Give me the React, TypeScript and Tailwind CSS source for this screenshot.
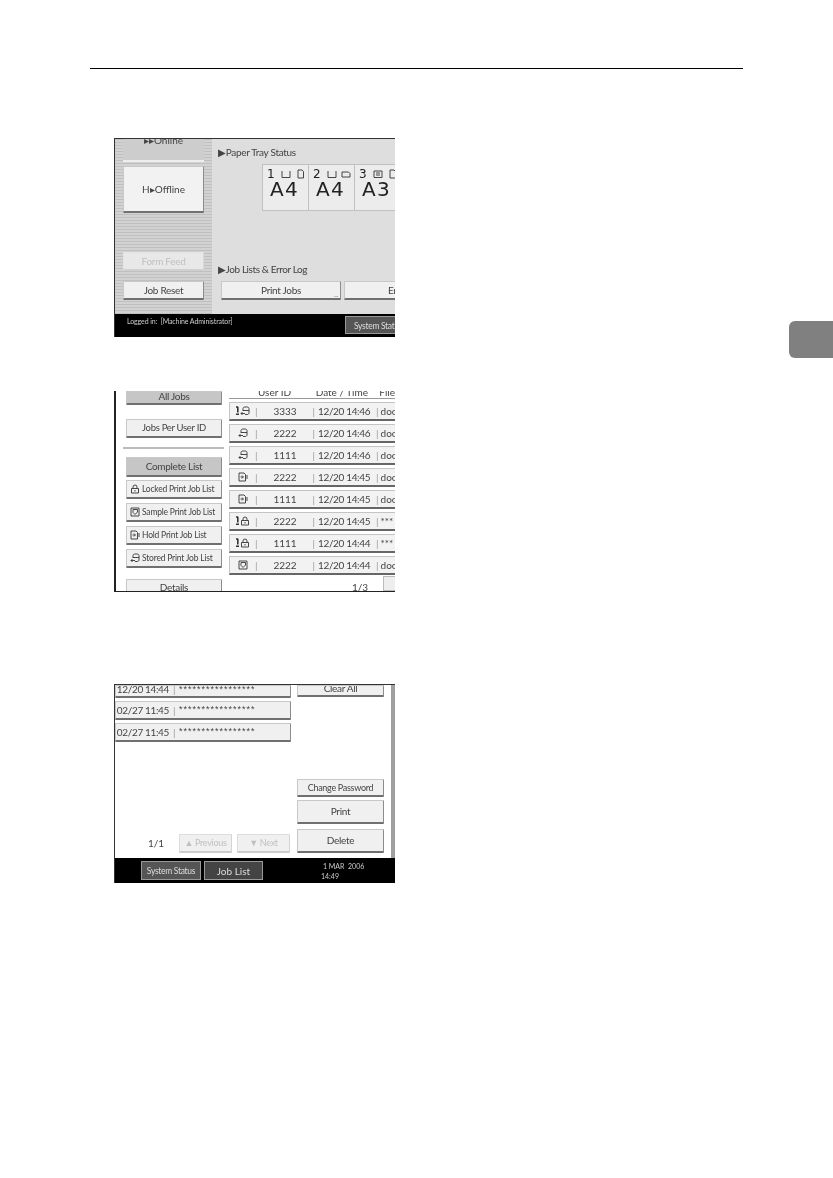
import React from 'react';
import { twMerge } from 'tailwind-merge';

const FONT = "font-['Lato',sans-serif]";

const Btn: React.FC<{ className?: string; children?: React.ReactNode }> = ({ className = '', children }) => (
  <div
    className={twMerge(
      'flex shrink-0 items-center justify-center overflow-hidden whitespace-nowrap rounded-[1px] border border-b-2 border-[#c8c8c8] border-b-[#707070] border-r-[#8c8c8c] bg-[#f0f0f0] text-[10px] tracking-[-0.3px] text-[#444]',
      className,
    )}
  >
    {children}
  </div>
);

// tiny drawings of the panel's job and tray icons
const Ico: React.FC<{ d: string; className?: string; w?: number; sw?: number }> = ({ d, className = '', w = 10, sw = 0.9 }) => (
  <svg width={w} height="10" viewBox={`0 0 ${w} 10`} fill="none" stroke="#333" strokeWidth={sw} className={`shrink-0 ${className}`}>
    <path d={d} />
  </svg>
);

const LOCK = 'M3 4.5V3a2 2 0 0 1 4 0v1.5M1.5 4.5h7V9h-7zM5 6v1.5';
const SAMPLE = 'M1 1h8v8H1zM3 2.5h4.5V5L5 7.5 3 5.5z';
const HOLD = 'M1 1h5l1.5 1.5V9H1zM2.5 5H5M4 3.5 5.5 5 4 6.5M9 3v4';
const STORED = 'M3 5V2.5C3 1.5 4 1 5 1h2c1 0 2 .5 2 1.5V7c0 1-1 1.5-2 1.5H5M3 4.5h6M5 7.5H1M2.5 6 1 7.5 2.5 9';
const USER = 'M1 1h2.2M2.8 1v5.5M1 8.2h3';
const TRAY_EMPTY = 'M1 2v6.5h8V2';
const TRAY_FULL = 'M1 2v6.5h8V2M1 2h8M3 4h4M3 6h4';

type Job = { icons: string[]; id: string; date: string; file: string };

const JOBS: Job[] = [
  { icons: [USER, STORED], id: '3333', date: '12/20 14:46', file: 'doc' },
  { icons: [STORED], id: '2222', date: '12/20 14:46', file: 'doc' },
  { icons: [STORED], id: '1111', date: '12/20 14:46', file: 'doc' },
  { icons: [HOLD], id: '2222', date: '12/20 14:45', file: 'doc' },
  { icons: [HOLD], id: '1111', date: '12/20 14:45', file: 'doc' },
  { icons: [USER, LOCK], id: '2222', date: '12/20 14:45', file: '***' },
  { icons: [USER, LOCK], id: '1111', date: '12/20 14:44', file: '***' },
  { icons: [SAMPLE], id: '2222', date: '12/20 14:44', file: 'doc' },
];

const Tray: React.FC<{ n: string; size: string; first: string; second: string }> = ({ n, size, first, second }) => (
  <div className="h-[47px] w-[46px] shrink-0 border-b border-l border-t border-[#c0c0c0] bg-[#ececec] font-['DejaVu_Sans',sans-serif] text-[#222]">
    <div className="flex h-[15px] items-center pl-[4px] pt-[3px] text-[12px] leading-[12px]">
      <span className="w-[14px]">{n}</span>
      <Ico d={first} className="mr-[4px]" />
      <Ico d={second} />
    </div>
    <div className="pl-[7px] text-[20px] leading-[18px] tracking-[1.2px]">{size}</div>
  </div>
);

const StatusScreen = () => (
  <section className="flex h-[199px] w-[281px] flex-col overflow-hidden border-l border-t border-[#333] bg-[#dedede] blur-[0.3px]">
    <div className="flex min-h-0 flex-1">
      <div className="flex w-[97px] shrink-0 flex-col bg-[repeating-linear-gradient(0deg,#c0c0c0_0px,#c0c0c0_1px,#d2d2d2_1px,#d2d2d2_3px)] px-[8px]">
        <div className="h-[23px] w-[81px] shrink-0 overflow-hidden border-b-2 border-[#eee] bg-[#cdcdcd] text-center text-[10px] leading-[2px] text-[#444]">
          ▸▸Online
        </div>
        <Btn className="mt-[4px] h-[47px] w-[81px] bg-[#f2f2f2] tracking-normal">H▸Offline</Btn>
        <Btn className="mt-[39px] h-[19px] w-[81px] border-[#e4e4e4] border-b-[#d0d0d0] border-r-[#d8d8d8] bg-[#e8e8e8] text-[#c0c0c0]">Form Feed</Btn>
        <Btn className="mt-[10px] h-[19px] w-[81px]">Job Reset</Btn>
      </div>
      <div className="flex min-w-0 flex-1 flex-col pl-[6px]">
        <div className="mt-[7px] text-[10px] leading-[13px] tracking-[-0.3px] text-[#444]">▶Paper Tray Status</div>
        <div className="ml-[44px] mt-[5px] flex">
          <Tray n="1" size="A4" first={TRAY_EMPTY} second="M3 1h4l1.5 1.5V9H3z" />
          <Tray n="2" size="A4" first={TRAY_EMPTY} second="M1 3h6.5L9 4.5V8H1z" />
          <Tray n="3" size="A3" first={TRAY_FULL} second="M3 1h4l1.5 1.5V9H3z" />
        </div>
        <div className="mt-[52px] text-[10px] leading-[13px] tracking-[-0.4px] text-[#444]">▶Job Lists &amp; Error Log</div>
        <div className="ml-[3px] mt-[5px] flex w-[190px] gap-[3px]">
          <Btn className="relative h-[19px] w-[120px]">
            Print Jobs
            <span className="absolute bottom-0 right-[2px] text-[7px] leading-none text-[#888]">...</span>
          </Btn>
          <Btn className="h-[19px] w-[100px] justify-start pl-[43px]">Error Log</Btn>
        </div>
      </div>
    </div>
    <div className="flex h-[23px] shrink-0 items-start overflow-hidden bg-black pl-[12px]">
      <span className="mt-[2px] w-[218px] shrink-0 whitespace-nowrap text-[7px] leading-[10px] tracking-[-0.1px] text-[#ccc]">Logged in:&nbsp; [Machine Administrator]</span>
      <div className="mt-[2px] h-[18px] w-[80px] shrink-0 whitespace-nowrap border border-[#999] bg-[#555] pl-[8px] text-[8.5px] leading-[18px] tracking-[-0.3px] text-[#ddd]">System Status</div>
    </div>
  </section>
);

const SideBtn: React.FC<{ icon: string; label: string }> = ({ icon, label }) => (
  <Btn className="h-[19px] w-[96px] justify-start gap-[2px] pl-[3px] text-[8.5px] tracking-[-0.2px]">
    <Ico d={icon} />
    {label}
  </Btn>
);

const ListScreen = () => (
  <section className="flex h-[201px] w-[281px] overflow-hidden border-b border-l-2 border-[#222] bg-white blur-[0.3px]">
    <div className="flex w-[113px] shrink-0 flex-col pl-[10px]">
      <Btn className="h-[14px] w-[96px] items-start bg-[#c6c6c6] leading-[8px]">All Jobs</Btn>
      <Btn className="mt-[14px] h-[19px] w-[96px] text-[9.5px]">Jobs Per User ID</Btn>
      <div className="-ml-[3px] mt-[9px] h-[2px] w-[101px] shrink-0 bg-[#bbb]" />
      <Btn className="mt-[8px] h-[20px] w-[96px] bg-[#c6c6c6]">Complete List</Btn>
      <div className="mt-[3px] flex flex-col gap-[4px]">
        <SideBtn icon={LOCK} label="Locked Print Job List" />
        <SideBtn icon={SAMPLE} label="Sample Print Job List" />
        <SideBtn icon={HOLD} label="Hold Print Job List" />
        <SideBtn icon={STORED} label="Stored Print Job List" />
      </div>
      <Btn className="mt-[11px] h-[20px] w-[96px] items-start">Details</Btn>
    </div>
    <div className="flex min-w-0 flex-1 flex-col text-[10px] text-[#444]">
      <div className="flex h-[8px] shrink-0 items-start overflow-hidden whitespace-nowrap border-b border-[#999] pl-[29px] leading-[3px]">
        <span className="w-[58px]">User ID</span>
        <span className="w-[64px]">Date / Time</span>
        <span>File</span>
      </div>
      <div className="mt-[3px] flex flex-col gap-[3px]">
        {JOBS.map((j, i) => (
          <div key={i} className="flex h-[19px] w-[170px] shrink-0 items-center overflow-hidden border border-b-2 border-[#c4c4c4] border-b-[#666] bg-[#f2f2f2]">
            <div className="flex w-[25px] shrink-0 items-center justify-center">
              {j.icons.map((d, k) => (
                <Ico key={k} d={d} w={k === 0 && j.icons.length > 1 ? 5 : 10} sw={k === 0 && j.icons.length > 1 ? 1.6 : 0.9} />
              ))}
            </div>
            <span className="text-[#999]">|</span>
            <span className="w-[55px] text-center">{j.id}</span>
            <span className="text-[#999]">|</span>
            <span className="w-[61px] whitespace-nowrap pl-[3px] tracking-[-0.35px]">{j.date}</span>
            <span className="text-[#999]">|</span>
            <span className="pl-[2px]">{j.file}</span>
          </div>
        ))}
      </div>
      <div className="flex flex-1 items-end pl-[123px]">
        <span className="-mb-[2px] w-[31px] shrink-0 leading-[12px]">1/3</span>
        <div className="h-[15px] w-[20px] shrink-0 border border-[#bbb] bg-[#eee]" />
      </div>
    </div>
  </section>
);

const MiniRow: React.FC<{ date: string; h: string }> = ({ date, h }) => (
  <Btn className={`${h} w-[176px] justify-start`}>
    <span className="w-[53px] shrink-0 whitespace-nowrap text-right tracking-[-0.35px]">{date}</span>
    <span className="w-[10px] shrink-0 text-center text-[#999]">|</span>
    <span className="font-['Liberation_Sans',sans-serif] text-[9px] tracking-[1px]">*****************</span>
  </Btn>
);

const PasswordScreen = () => (
  <section className="flex h-[199px] w-[281px] flex-col overflow-hidden border-l border-t border-[#333] bg-white blur-[0.3px]">
    <div className="flex min-h-0 flex-1 border-r-4 border-[#a0a0a0]">
      <div className="flex w-[176px] shrink-0 flex-col">
        <div className="flex flex-col gap-[3px]">
          <MiniRow date="12/20 14:44" h="h-[13px] pb-[3px]" />
          <MiniRow date="02/27 11:45" h="h-[19px]" />
          <MiniRow date="02/27 11:45" h="h-[19px]" />
        </div>
        <div className="mb-[5px] mt-auto flex items-center">
          <span className="w-[64px] pl-[33px] text-[10px] text-[#444]">1/1</span>
          <Btn className="h-[19px] w-[53px] border-[#ddd] border-b-[#ccc] border-r-[#d4d4d4] bg-[#f0f0f0] text-[9px] text-[#c0c0c0]">▲ Previous</Btn>
          <Btn className="ml-[5px] h-[19px] w-[53px] border-[#ddd] border-b-[#ccc] border-r-[#d4d4d4] bg-[#f0f0f0] text-[9px] text-[#c0c0c0]">▼ Next</Btn>
        </div>
      </div>
      <div className="ml-[6px] flex w-[87px] shrink-0 flex-col">
        <Btn className="h-[12px] w-[87px] items-start leading-[5px]">Clear All</Btn>
        <Btn className="mt-[82px] h-[18px] w-[87px] text-[9px]">Change Password</Btn>
        <Btn className="mt-[3px] h-[24px] w-[87px]">Print</Btn>
        <Btn className="mt-[5px] h-[24px] w-[87px]">Delete</Btn>
      </div>
    </div>
    <div className="flex h-[25px] shrink-0 items-center bg-black pl-[26px]">
      <div className="h-[19px] w-[60px] whitespace-nowrap border border-[#999] bg-[#555] text-center text-[8.5px] leading-[18px] tracking-[-0.3px] text-[#ddd]">System Status</div>
      <div className="ml-[3px] h-[19px] w-[59px] whitespace-nowrap border border-[#999] bg-[#444] text-center text-[10px] leading-[18px] text-[#ddd]">Job List</div>
      <div className="ml-[58px] w-[50px] text-[7px] leading-[10px] text-[#ccc]">
        <div className="whitespace-nowrap pl-[2px]">1 MAR&nbsp; 2006</div>
        <div>14:49</div>
      </div>
    </div>
  </section>
);

export default function App() {
  return (
    <div className={`flex h-[1178px] w-[833px] overflow-hidden bg-white ${FONT}`}>
      <main className="w-[789px] shrink-0 pt-[68px]">
        <div className="ml-[90px] h-px w-[653px] bg-black" />
        <div className="ml-[114px] mt-[69px]">
          <StatusScreen />
          <div className="mt-[54px]">
            <ListScreen />
          </div>
          <div className="mt-[92px]">
            <PasswordScreen />
          </div>
        </div>
      </main>
      <aside className="flex-1 pt-[321px]">
        <div className="h-[37px] w-full rounded-l-[6px] bg-[#808080]" />
      </aside>
    </div>
  );
}
